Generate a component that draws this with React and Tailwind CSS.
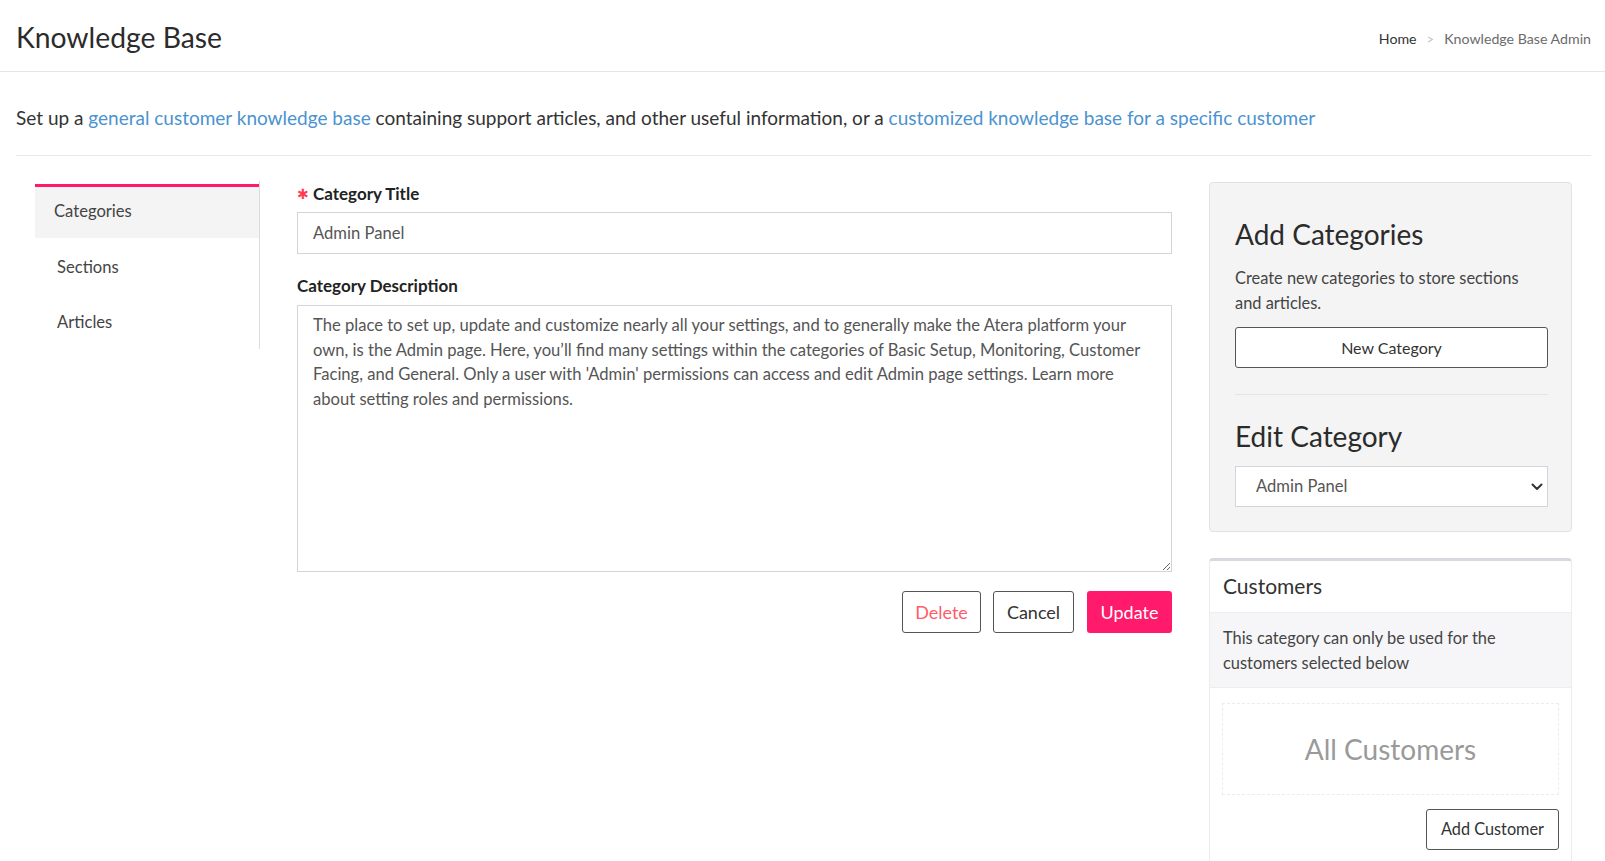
import React from "react";

const desc =
  "The place to set up, update and customize nearly all your settings, and to generally make the Atera platform your\nown, is the Admin page. Here, you\u2019ll find many settings within the categories of Basic Setup, Monitoring, Customer\nFacing, and General. Only a user with 'Admin' permissions can access and edit Admin page settings. Learn more\nabout setting roles and permissions.";

function Chevron() {
  return (
    <svg width="12" height="8" viewBox="0 0 12 8" fill="none">
      <path d="M1.5 1.5L6 6L10.5 1.5" stroke="#333" strokeWidth="2" strokeLinecap="round" strokeLinejoin="round" />
    </svg>
  );
}

export default function App() {
  return (
    <div className="min-h-[861px] bg-white font-[Lato,sans-serif] text-[#333]">
      <header className="h-[72px] border-b border-[#e6e6e6] flex items-center justify-between pl-4 pr-[14px]">
        <h1 className="text-[28.3px] leading-[36px] text-[#2b2b2b] pt-[2px]">Knowledge Base</h1>
        <nav className="flex items-center text-[14.2px] leading-[20px] pt-[7px]">
          <span className="text-[#333]">Home</span>
          <span className="text-[#c0c0c0] mx-[10px] text-[13px]">&gt;</span>
          <span className="text-[#6b6b6b]">Knowledge Base Admin</span>
        </nav>
      </header>

      <main className="pl-4 pr-[14px]">
        <p className="mt-[32px] mb-[23px] text-[19px] leading-[28px] text-[#333]">
          Set up a <span className="text-[#4b93cf]">general customer knowledge base</span> containing support articles, and other useful information, or a{" "}
          <span className="text-[#4b93cf]">customized knowledge base for a specific customer</span>
        </p>
        <div className="border-t border-[#e9e9e9]" />

        <div className="flex px-[19px] mt-[24px]">
          {/* Left nav */}
          <div className="w-[225px] shrink-0">
            <ul className="mt-[1px] pt-[3px] border-r border-[#dcdcdc] text-[16.6px] text-[#444]">
              <li className="h-[54px] border-t-[3px] border-[#ff1a6c] bg-[#f4f4f4] flex items-center pl-[19px] pb-[2px]">Categories</li>
              <li className="h-[56px] flex items-center pl-[22px] pt-[3px]">Sections</li>
              <li className="h-[55px] flex items-center pl-[22px] pt-[2px]">Articles</li>
            </ul>
          </div>

          {/* Form */}
          <div className="ml-[37px] w-[875px] shrink-0">
            <label className="flex items-center pt-[2px] text-[17px] leading-[24px] font-bold text-[#222]">
              <span className="text-[#ff3d55] text-[14px] leading-[14px] mr-[4px] font-normal">✱</span>
              Category Title
            </label>
            <div className="mt-[6px] h-[42px] border border-[#d3d4dc] flex items-center pl-[15px] text-[16.6px] text-[#555]">
              Admin Panel
            </div>
            <label className="block mt-[20px] text-[17px] leading-[24px] font-bold text-[#222]">Category Description</label>
            <textarea
              wrap="off"
              readOnly
              defaultValue={desc}
              className="mt-[7px] block w-full h-[267px] border border-[#d3d4dc] pl-[15px] pr-[10px] pt-[7px] text-[16.6px] leading-[24.7px] text-[#555] whitespace-pre overflow-hidden resize-y outline-none"
            />
            <div className="mt-[19px] flex justify-end text-[18px]">
              <button className="h-[42px] w-[79px] border border-[#555] rounded-[3px] text-[#ff5b6b] bg-white">Delete</button>
              <button className="ml-[12px] h-[42px] w-[81px] border border-[#555] rounded-[3px] text-[#333] bg-white">Cancel</button>
              <button className="ml-[13px] h-[42px] w-[85px] rounded-[3px] text-white bg-[#ff1a6c]">Update</button>
            </div>
          </div>

          {/* Right column */}
          <div className="ml-[37px] w-[363px] shrink-0 mt-[2px]">
            <div className="bg-[#f4f4f4] border border-[#e2e2e2] rounded-[4px] pl-[25px] pr-[23px] pt-[34px] pb-[24px]">
              <h2 className="text-[28px] leading-[34px] text-[#2b2b2b]">Add Categories</h2>
              <p className="mt-[14px] text-[16.4px] leading-[25px] text-[#444]">
                Create new categories to store sections and articles.
              </p>
              <button className="mt-[12px] w-full h-[41px] bg-white border border-[#555] rounded-[3px] text-[16px] text-[#333]">
                New Category
              </button>
              <div className="mt-[26px] border-t border-[#e4e4e4]" />
              <h2 className="mt-[24px] text-[28px] leading-[34px] text-[#2b2b2b]">Edit Category</h2>
              <div className="mt-[13px] h-[41px] bg-white border border-[#d3d4dc] flex items-center justify-between pl-[20px] pr-[4px] text-[16.6px] text-[#555]">
                <span>Admin Panel</span>
                <Chevron />
              </div>
            </div>

            <div className="mt-[26px] border border-[#ececec] border-t-[3px] border-t-[#d6d9df] rounded-t-[4px] h-[310px]">
              <div className="pl-[13px] pt-[10px] pb-[11px] text-[21px] leading-[30px] text-[#333]">Customers</div>
              <div className="bg-[#f6f6f8] border-y border-[#eeeeee] pl-[13px] pr-[20px] py-[12px] text-[16.4px] leading-[25px] text-[#444]">
                This category can only be used for the customers selected below
              </div>
              <div className="mx-[12px] mt-[15px] h-[92px] border border-dashed border-[#ececec] flex items-center justify-center text-[28px] text-[#9a9a9a]">
                All Customers
              </div>
              <div className="mt-[14px] mr-[12px] flex justify-end">
                <button className="h-[41px] w-[133px] bg-white border border-[#555] rounded-[3px] text-[16.3px] text-[#333]">
                  Add Customer
                </button>
              </div>
            </div>
          </div>
        </div>
      </main>
    </div>
  );
}
